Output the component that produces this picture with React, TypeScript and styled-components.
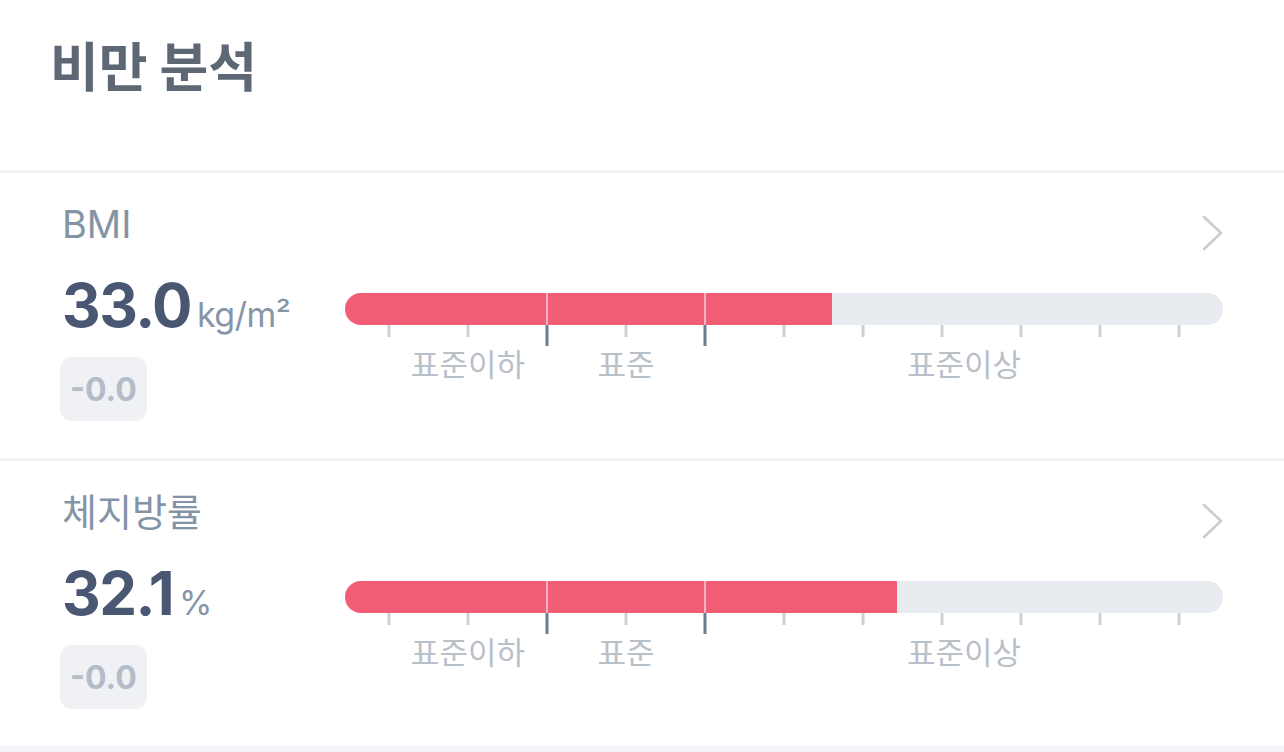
import styled, { createGlobalStyle } from "styled-components";

const GlobalStyle = createGlobalStyle`
  html, body {
    margin: 0;
    padding: 0;
    background-color: #f4f5f8;
  }

  body {
    font-family: Inter, "Noto Sans CJK KR", sans-serif;
    -webkit-font-smoothing: antialiased;
  }
`;

const Page = styled.div`
  width: 1284px;
  background-color: #fff;
`;

const Header = styled.div`
  height: 170px;
  padding: 38px 0 0 50px;
  box-sizing: border-box;
`;

const Title = styled.h1`
  margin: 0;
  font-family: "Noto Sans CJK KR", sans-serif;
  font-size: 53px;
  line-height: 53px;
  font-weight: 700;
  color: #5e6874;
`;

const Section = styled.section`
  border-top: 3px solid #f2f3f6;
  padding: 32px 61px 37px 62px;
`;

const Top = styled.div`
  height: 38px;
  display: flex;
  align-items: flex-start;
  justify-content: space-between;
`;

const Label = styled.p`
  margin: 0;
  font-size: 38px;
  line-height: 38px;
  color: #8494a7;
`;

const Chevron = styled.svg`
  margin-top: 10px;
  flex-shrink: 0;
`;

const Body = styled.div`
  display: flex;
  margin-top: 32px;
`;

const Left = styled.div`
  width: 283px;
  flex-shrink: 0;
`;

const Value = styled.div`
  display: flex;
  align-items: baseline;
  gap: 6px;
`;

const Number = styled.span`
  font-size: 60px;
  line-height: 60px;
  font-weight: 700;
  color: #4a5773;
  letter-spacing: -1.5px;
`;

const Unit = styled.span`
  font-size: 34px;
  color: #8695a8;
  letter-spacing: -0.5px;
`;

const Badge = styled.div`
  display: inline-flex;
  align-items: center;
  height: 64px;
  margin: 22px 0 0 -2px;
  padding: 0 10px;
  border-radius: 12px;
  background-color: #eff1f5;
  font-size: 32px;
  font-weight: 700;
  color: #b4bcc7;
`;

const Gauge = styled.div`
  flex: 1;
  padding-top: 18px;
`;

const Track = styled.div`
  position: relative;
  height: 32px;
  border-radius: 16px;
  background-color: #e8ebf0;
  overflow: hidden;
`;

const Fill = styled.div`
  height: 100%;
  background-color: #f25d76;
`;

const Divider = styled.div<{ $at: number }>`
  position: absolute;
  top: 0;
  bottom: 0;
  left: ${(p) => p.$at}%;
  width: 2px;
  transform: translateX(-50%);
  background-color: rgba(250, 200, 210, 0.8);
`;

const Scale = styled.div`
  position: relative;
  height: 60px;
`;

const Tick = styled.div<{ $at: number; $major: boolean }>`
  position: absolute;
  top: 0;
  left: ${(p) => p.$at}%;
  width: 3px;
  height: ${(p) => (p.$major ? 21 : 12)}px;
  transform: translateX(-50%);
  background-color: ${(p) => (p.$major ? "#6f7d90" : "#cdd1d7")};
`;

const Range = styled.span<{ $at: number }>`
  position: absolute;
  top: 22px;
  left: ${(p) => p.$at}%;
  transform: translateX(-50%);
  font-family: "Noto Sans CJK KR", sans-serif;
  font-size: 31px;
  line-height: 31px;
  color: #b8c0ca;
  white-space: nowrap;
`;

const ticks = [5, 14, 23, 32, 41, 50, 59, 68, 77, 86, 95];
const majors = [23, 41];
const ranges = [
  { text: "표준이하", at: 14 },
  { text: "표준", at: 32 },
  { text: "표준이상", at: 70.5 },
];

const items = [
  { label: "BMI", value: "33.0", unit: "kg/m²", diff: "-0.0", fill: 55.5 },
  { label: "체지방률", value: "32.1", unit: "%", diff: "-0.0", fill: 62.9 },
];

const App = () => {
  return (
    <>
      <GlobalStyle />
      <Page>
        <Header>
          <Title>비만 분석</Title>
        </Header>

        {items.map((item) => (
          <Section key={item.label}>
            <Top>
              <Label>{item.label}</Label>
              <Chevron width="21" height="36" viewBox="0 0 21 36">
                <polyline
                  points="2,2 19,18 2,34"
                  fill="none"
                  stroke="#c9cdd3"
                  strokeWidth="2.6"
                  strokeLinecap="round"
                  strokeLinejoin="round"
                />
              </Chevron>
            </Top>

            <Body>
              <Left>
                <Value>
                  <Number>{item.value}</Number>
                  <Unit>{item.unit}</Unit>
                </Value>
                <Badge>{item.diff}</Badge>
              </Left>

              <Gauge>
                <Track>
                  <Fill style={{ width: `${item.fill}%` }} />
                  {majors.map((m) => (
                    <Divider key={m} $at={m} />
                  ))}
                </Track>
                <Scale>
                  {ticks.map((t) => (
                    <Tick key={t} $at={t} $major={majors.includes(t)} />
                  ))}
                  {ranges.map((r) => (
                    <Range key={r.text} $at={r.at}>
                      {r.text}
                    </Range>
                  ))}
                </Scale>
              </Gauge>
            </Body>
          </Section>
        ))}
      </Page>
    </>
  );
};

export default App;
